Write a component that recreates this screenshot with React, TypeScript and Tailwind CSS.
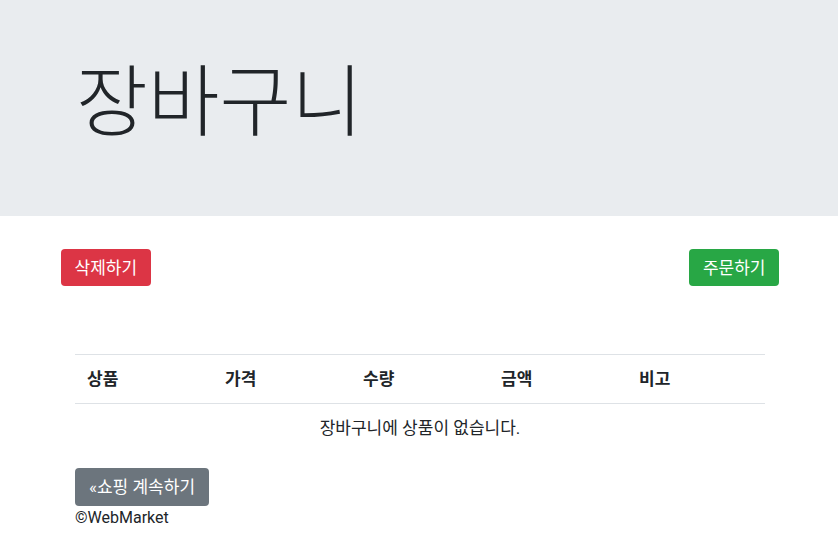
import React from "react";

const font = { fontFamily: 'Roboto, "Noto Sans CJK KR", sans-serif' };

export default function App() {
  return (
    <div className="bg-white text-[#212529] text-[16px] leading-[1.5] min-h-[538px]" style={font}>
      <div className="bg-[#e9ecef] h-[216px] w-full">
        <div className="w-[720px] mx-auto pl-[17px] pr-[15px] pt-[57px]">
          <h1 className="text-[78px] font-light leading-[1.2] text-[#212529] h-[94px]">장바구니</h1>
        </div>
      </div>
      <div className="w-[720px] mx-auto pt-[33px]">
        <div className="flex justify-between pl-[2px]">
          <button className="h-[37px] px-[13.5px] rounded-[4px] bg-[#dc3545] text-white text-[17px] leading-[24px]">삭제하기</button>
          <button className="h-[37px] px-[13.5px] rounded-[4px] bg-[#28a745] text-white text-[17px] leading-[24px]">주문하기</button>
        </div>
        <div className="pt-[68px] pl-[16px] pr-[14px]">
          <table className="w-[690px] border-collapse">
            <thead>
              <tr className="border-t border-[#dee2e6]">
                <th className="w-[138px] text-left font-bold px-[12px] py-[12px] border-b border-[#dee2e6] text-[17px] leading-[24px]">상품</th>
                <th className="w-[138px] text-left font-bold px-[12px] py-[12px] border-b border-[#dee2e6] text-[17px] leading-[24px]">가격</th>
                <th className="w-[138px] text-left font-bold px-[12px] py-[12px] border-b border-[#dee2e6] text-[17px] leading-[24px]">수량</th>
                <th className="w-[138px] text-left font-bold px-[12px] py-[12px] border-b border-[#dee2e6] text-[17px] leading-[24px]">금액</th>
                <th className="w-[138px] text-left font-bold px-[12px] py-[12px] border-b border-[#dee2e6] text-[17px] leading-[24px]">비고</th>
              </tr>
            </thead>
            <tbody>
              <tr>
                <td colSpan={5} className="text-center px-[12px] py-[12px] text-[17px] leading-[24px]">장바구니에 상품이 없습니다.</td>
              </tr>
            </tbody>
          </table>
          <div className="pt-[16px]">
            <button className="h-[38px] px-[14px] rounded-[4px] bg-[#6c757d] text-white text-[17px] leading-[24px]">«쇼핑 계속하기</button>
          </div>
          <div className="leading-[24px]">©WebMarket</div>
        </div>
      </div>
    </div>
  );
}
